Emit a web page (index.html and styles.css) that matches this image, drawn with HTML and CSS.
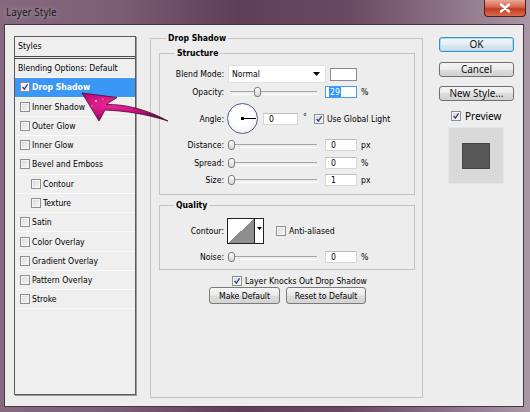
FILE: index.html
```html
<!DOCTYPE html>
<html>
<head>
<meta charset="utf-8">
<link rel="stylesheet" href="styles.css">
</head>
<body>
<div class="titlebar">
  <span class="title">Layer Style</span>
  <div class="close"><svg width="12" height="10" viewBox="0 0 12 10"><path d="M2 1.5 L10 8.5 M10 1.5 L2 8.5" stroke="#fff" stroke-width="2.4" stroke-linecap="round"/></svg></div>
</div>
<div class="client">
  <div class="styles">
    <div class="list-head">Styles</div>
    <div class="row plain">Blending Options: Default</div>
    <div class="row sel"><span class="cb on"><svg viewBox="0 0 10 10"><path d="M2 5 L4.2 7.6 L8.2 1.8" fill="none" stroke="#2a3a8c" stroke-width="1.6"/></svg></span>Drop Shadow</div>
    <div class="row"><span class="cb"></span>Inner Shadow</div>
    <div class="row"><span class="cb"></span>Outer Glow</div>
    <div class="row"><span class="cb"></span>Inner Glow</div>
    <div class="row"><span class="cb"></span>Bevel and Emboss</div>
    <div class="row sub"><span class="cb"></span>Contour</div>
    <div class="row sub"><span class="cb"></span>Texture</div>
    <div class="row"><span class="cb"></span>Satin</div>
    <div class="row"><span class="cb"></span>Color Overlay</div>
    <div class="row"><span class="cb"></span>Gradient Overlay</div>
    <div class="row"><span class="cb"></span>Pattern Overlay</div>
    <div class="row"><span class="cb"></span>Stroke</div>
  </div>

  <fieldset class="outer">
    <legend>Drop Shadow</legend>
    <fieldset class="inner structure">
      <legend>Structure</legend>
      <div class="f r-blend">
        <span class="lbl">Blend Mode:</span>
        <div class="select"><span>Normal</span><svg width="7" height="4" viewBox="0 0 7 4"><path d="M0 0 H7 L3.5 4 Z" fill="#000"/></svg></div>
        <div class="swatch"></div>
      </div>
      <div class="f r-op">
        <span class="lbl">Opacity:</span>
        <div class="slider"><span class="thumb" style="left:26px"></span></div>
        <div class="num focus"><span class="hl">29</span></div>
        <span class="unit">%</span>
      </div>
      <div class="f r-angle">
        <span class="lbl">Angle:</span>
        <div class="dial"><span class="hand"></span><span class="dot"></span></div>
        <div class="num wide">0</div>
        <span class="deg">°</span>
        <span class="cb on gl"><svg viewBox="0 0 10 10"><path d="M2 5 L4.2 7.6 L8.2 1.8" fill="none" stroke="#2a3a8c" stroke-width="1.6"/></svg></span>
        <span class="cbtext">Use Global Light</span>
      </div>
      <div class="f r-dist">
        <span class="lbl">Distance:</span>
        <div class="slider"><span class="thumb" style="left:0px"></span></div>
        <div class="num">0</div>
        <span class="unit">px</span>
      </div>
      <div class="f r-spread">
        <span class="lbl">Spread:</span>
        <div class="slider"><span class="thumb" style="left:0px"></span></div>
        <div class="num">0</div>
        <span class="unit">%</span>
      </div>
      <div class="f r-size">
        <span class="lbl">Size:</span>
        <div class="slider"><span class="thumb" style="left:0px"></span></div>
        <div class="num">1</div>
        <span class="unit">px</span>
      </div>
    </fieldset>
    <fieldset class="inner quality">
      <legend>Quality</legend>
      <div class="f r-contour">
        <span class="lbl">Contour:</span>
        <div class="picker"><div class="curve"></div><div class="drop"><svg width="5" height="3" viewBox="0 0 5 3"><path d="M0 0 H5 L2.5 3 Z" fill="#000"/></svg></div></div>
        <span class="cb aa"></span>
        <span class="cbtext">Anti-aliased</span>
      </div>
      <div class="f r-noise">
        <span class="lbl">Noise:</span>
        <div class="slider"><span class="thumb" style="left:0px"></span></div>
        <div class="num">0</div>
        <span class="unit">%</span>
      </div>
    </fieldset>
    <div class="f knock">
      <span class="cb on"><svg viewBox="0 0 10 10"><path d="M2 5 L4.2 7.6 L8.2 1.8" fill="none" stroke="#2a3a8c" stroke-width="1.6"/></svg></span>
      <span class="cbtext">Layer Knocks Out Drop Shadow</span>
    </div>
    <div class="defaults">
      <div class="pbtn w1">Make Default</div>
      <div class="pbtn w2">Reset to Default</div>
    </div>
  </fieldset>

  <div class="side">
    <div class="btn ok">OK</div>
    <div class="btn b2">Cancel</div>
    <div class="btn b3">New Style...</div>
    <div class="preview-row">
      <span class="cb on"><svg viewBox="0 0 10 10"><path d="M2 5 L4.2 7.6 L8.2 1.8" fill="none" stroke="#2a3a8c" stroke-width="1.6"/></svg></span>
      <span class="ptext">Preview</span>
    </div>
    <div class="preview"><div class="swatch-dark"></div></div>
  </div>
</div>

<svg class="arrow" width="94" height="40" viewBox="78 87 94 40">
  <defs>
    <radialGradient id="mg" cx="0.35" cy="0.4" r="0.7">
      <stop offset="0" stop-color="#f0289a"/>
      <stop offset="0.55" stop-color="#c4107a"/>
      <stop offset="1" stop-color="#6a0a45"/>
    </radialGradient>
  </defs>
  <path d="M82 93 L117 97.5 L106 104.5 C126 104 148 110 168 121 C146 114 126 111 105 110 L99 121 Z" fill="url(#mg)" stroke="#4a0630" stroke-width="0.8" stroke-linejoin="round"/>
  <circle cx="96" cy="101" r="0.9" fill="#ffd0ea"/>
  <circle cx="103" cy="99" r="0.6" fill="#fff"/>
  <circle cx="92" cy="106" r="0.6" fill="#ffd0ea"/>
</svg>
</body>
</html>
```
FILE: styles.css
```css
* { box-sizing: border-box; }
html, body { margin: 0; }
body {
  width: 530px;
  height: 412px;
  overflow: hidden;
  position: relative;
  background: linear-gradient(90deg, #86697f 0%, #7b5d74 22%, #5f3e57 45%, #6a4a62 66%, #8f7589 86%, #a998a6 100%);
  font-family: "DejaVu Sans Condensed", "DejaVu Sans", sans-serif;
  font-size: 8.6px;
  color: #000;
}

.titlebar {
  height: 24px;
  display: flex;
  justify-content: space-between;
  align-items: flex-start;
}
.title {
  font-family: "Noto Sans", sans-serif;
  font-size: 10px;
  line-height: 14px;
  color: #1a1a1a;
  padding: 5px 0 0 6px;
  text-shadow: 0 0 5px rgba(255, 255, 255, 0.5);
}
.close {
  width: 42px;
  height: 17px;
  margin-right: 4px;
  border: 1px solid #4a2222;
  border-top: none;
  border-radius: 0 0 4px 4px;
  background: linear-gradient(#eaa898, #d6654b 45%, #c33a20 55%, #d86c4c);
  display: flex;
  align-items: center;
  justify-content: center;
}

.client {
  margin: 0 6px 0 4px;
  height: 383px;
  border: 1px solid #4a3646;
  background: #ededed;
  display: flex;
  align-items: flex-start;
  padding: 11px 0 0 9px;
}

/* styles list */
.styles {
  flex: none;
  width: 122px;
  height: 359px;
  border: 1px solid #5a5a5a;
  box-shadow: 1px 1px 0 #9a9a9a;
  background: #efefef;
}
.list-head {
  height: 22px;
  padding-left: 3px;
  line-height: 19px;
  border-bottom: 3px double #4a4a4a;
}
.row {
  height: 19.27px;
  border-bottom: 1px solid #fbfbfb;
  display: flex;
  align-items: center;
  gap: 2px;
  padding-left: 5px;
  white-space: nowrap;
}
.row.plain { padding-left: 3px; }
.row.sub { padding-left: 16px; }
.row.sel {
  background: #3b97f5;
  color: #fff;
  font-weight: bold;
}

/* checkbox */
.cb {
  flex: none;
  width: 10px;
  height: 10px;
  border: 1px solid #8e8f8f;
  background: linear-gradient(135deg, #d8d8d8, #f8f8f8);
  box-shadow: inset 0 0 0 1px #f4f4f4;
  display: flex;
}
.cb svg { width: 8px; height: 8px; }
.row.sel .cb { background: #f4f4f4; }

/* fieldsets */
fieldset {
  margin: 0;
  min-width: 0;
  border: 1px solid #c4c4c4;
}
legend {
  font-weight: bold;
  padding: 0 2px;
  line-height: 10px;
}
.outer {
  flex: none;
  margin: -3px 0 0 14px;
  width: 273px;
  height: 365px;
  padding: 0 7px 0 8px;
}
.outer > legend { margin-left: 7px; }
.inner { padding: 7px 0 8px 0; }
.structure { margin-top: 5px; }
.structure > legend { margin-left: 15px; }
.quality { margin-top: 5px; padding: 8px 0 6px 0; }
.quality > legend { margin-left: 14px; }

.f {
  display: flex;
  align-items: center;
  white-space: nowrap;
}
.lbl {
  flex: none;
  width: 64px;
  margin-right: 4px;
  text-align: right;
}
.r-blend { height: 18px; }
.r-op { height: 12px; margin-top: 3px; }
.r-angle { height: 31px; margin-top: 5px; }
.r-dist { height: 12px; margin-top: 5px; }
.r-spread { height: 12px; margin-top: 6px; }
.r-size { height: 12px; margin-top: 5px; }
.r-contour { height: 26px; }
.r-noise { height: 12px; margin-top: 7px; }

.select {
  flex: none;
  width: 98px;
  height: 18px;
  background: #fff;
  border: 1px solid #e2e2e2;
  display: flex;
  align-items: center;
  justify-content: space-between;
  padding: 0 5px 0 3px;
}
.swatch {
  flex: none;
  width: 27px;
  height: 13px;
  margin-left: 4px;
  background: #fff;
  border: 1px solid #8a8a8a;
}

.slider {
  flex: none;
  width: 89px;
  height: 12px;
  position: relative;
}
.slider::before {
  content: "";
  position: absolute;
  left: 2px;
  right: 0;
  top: 5px;
  height: 2px;
  border-top: 1px solid #a4a4a4;
  border-bottom: 1px solid #ffffff;
}
.thumb {
  position: absolute;
  top: 1px;
  width: 7px;
  height: 10px;
  border: 1px solid #7c7c7c;
  border-radius: 3px;
  background: linear-gradient(#ffffff, #d4d4d4);
}

.num {
  flex: none;
  width: 32px;
  height: 12px;
  margin-left: 8px;
  background: #fff;
  border: 1px solid #d6d6d6;
  border-top-color: #bdbdbd;
  padding-left: 5px;
  line-height: 10px;
}
.num.focus {
  border-color: #4d9be8;
  padding-left: 3px;
}
.hl {
  background: #3399ff;
  color: #fff;
  padding: 0 1px;
}
.num.wide { width: 35px; margin-left: 5px; }
.unit { margin-left: 4px; }
.deg { margin-left: 5px; align-self: flex-start; margin-top: 9px; }

.dial {
  flex: none;
  width: 31px;
  height: 31px;
  margin-left: -1px;
  border-radius: 50%;
  border: 1.5px solid #4e5d85;
  background: radial-gradient(circle at 45% 40%, #ffffff 40%, #e6e6ee);
  position: relative;
}
.hand {
  position: absolute;
  left: 14px;
  top: 13.5px;
  width: 14px;
  height: 1px;
  background: #000;
}
.dot {
  position: absolute;
  left: 12.5px;
  top: 12.5px;
  width: 3px;
  height: 3px;
  background: #000;
}
.cb.gl { margin-left: 7px; }
.cbtext { margin-left: 3px; }

.picker {
  flex: none;
  width: 37px;
  height: 26px;
  margin-left: -1px;
  border: 1px solid #222;
  display: flex;
  background: #fff;
}
.curve {
  width: 27px;
  height: 100%;
  background: linear-gradient(to top left, #8e8e8e 50%, #ffffff 50%);
  border-right: 1px solid #222;
}
.drop {
  flex: 1;
  display: flex;
  align-items: flex-start;
  justify-content: center;
  padding-top: 8px;
}
.cb.aa { margin-left: 12px; }

.knock {
  height: 11px;
  margin-top: 5px;
  padding-left: 73px;
}
.defaults {
  margin-top: 1px;
  display: flex;
  justify-content: center;
  gap: 6px;
  padding-left: 1px;
}
.pbtn {
  height: 17px;
  border: 1px solid #7a7a7a;
  border-radius: 3px;
  background: linear-gradient(#f6f6f6, #e8e8e8 50%, #dcdcdc 50%, #d4d4d4);
  display: flex;
  align-items: center;
  justify-content: center;
  white-space: nowrap;
}
.pbtn.w1 { width: 71px; }
.pbtn.w2 { width: 80px; }

/* right side */
.side {
  flex: none;
  width: 75px;
  margin: 1px 0 0 16px;
  display: flex;
  flex-direction: column;
}
.btn {
  height: 15px;
  border: 1px solid #707070;
  border-radius: 3px;
  background: linear-gradient(#f4f4f4, #ebebeb 50%, #dddddd 50%, #d2d2d2);
  font-family: "Noto Sans", sans-serif;
  font-size: 10px;
  line-height: 13px;
  text-align: center;
  color: #111;
}
.btn.ok {
  border-color: #3c8fc8;
  box-shadow: inset 0 0 0 1px #a6dcf6;
  background: linear-gradient(#f2f8fb, #e4eef4 50%, #d6e5ee 50%, #cfe0ea);
}
.btn.b2 { margin-top: 10px; }
.btn.b3 { margin-top: 9px; }
.preview-row {
  margin-top: 10px;
  height: 10px;
  display: flex;
  align-items: center;
  padding-left: 12px;
}
.ptext {
  margin-left: 4px;
  font-family: "Noto Sans", sans-serif;
  font-size: 10px;
}
.preview {
  margin: 6px 0 0 9px;
  width: 56px;
  height: 57px;
  background: #d9d9d9;
  border: 1px solid #e6e6e6;
  display: flex;
  align-items: center;
  justify-content: center;
}
.swatch-dark {
  width: 28px;
  height: 26px;
  background: #575757;
  border: 1px solid #444;
}

.arrow {
  position: absolute;
  left: 78px;
  top: 87px;
  pointer-events: none;
}
```
